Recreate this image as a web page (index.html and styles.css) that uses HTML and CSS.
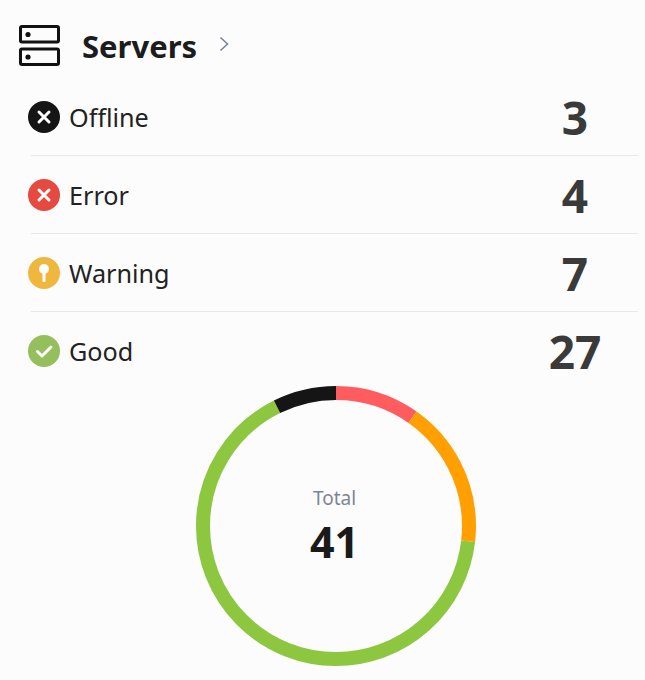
FILE: index.html
```html
<!DOCTYPE html>
<html lang="en">
<head>
<meta charset="utf-8">
<title>Servers</title>
<link rel="stylesheet" href="styles.css">
</head>
<body>
<main class="panel">
  <header class="head">
    <svg class="head-icon" viewBox="0 0 42 42" width="42" height="42" aria-hidden="true">
      <rect x="1.5" y="1.5" width="38" height="15.5" rx="1.5" class="sv"/>
      <rect x="1.5" y="24" width="38" height="15.5" rx="1.5" class="sv"/>
      <circle cx="9" cy="9.5" r="2.6" fill="#111"/>
      <circle cx="9" cy="32" r="2.6" fill="#111"/>
    </svg>
    <h1 class="title">Servers</h1>
    <svg class="chev" viewBox="0 0 10 16" width="10" height="16" aria-hidden="true"><path d="M1.5 1.5 8.5 8 1.5 14.5" fill="none" stroke="#7b8494" stroke-width="1.6"/></svg>
  </header>
  <ul class="rows">
    <li class="row">
      <svg class="st" viewBox="0 0 32 32" width="32" height="32"><circle cx="16" cy="16" r="16" fill="#151515"/><path d="M11 11 21 21M21 11 11 21" stroke="#fff" stroke-width="3" stroke-linecap="round"/></svg>
      <span class="label">Offline</span><span class="num">3</span>
    </li>
    <li class="row">
      <svg class="st" viewBox="0 0 32 32" width="32" height="32"><circle cx="16" cy="16" r="16" fill="#e5493f"/><path d="M11 11 21 21M21 11 11 21" stroke="#fff" stroke-width="3" stroke-linecap="round"/></svg>
      <span class="label">Error</span><span class="num">4</span>
    </li>
    <li class="row">
      <svg class="st" viewBox="0 0 32 32" width="32" height="32"><circle cx="16" cy="16" r="16" fill="#f0b73f"/><circle cx="16" cy="12" r="5" fill="#fff"/><path d="M16 13v10.5" stroke="#fff" stroke-width="3" stroke-linecap="round"/></svg>
      <span class="label">Warning</span><span class="num">7</span>
    </li>
    <li class="row">
      <svg class="st" viewBox="0 0 32 32" width="32" height="32"><circle cx="16" cy="16" r="16" fill="#94bf5c"/><path d="M9.5 16.5 14 21 23 12" fill="none" stroke="#fff" stroke-width="3" stroke-linecap="round" stroke-linejoin="round"/></svg>
      <span class="label">Good</span><span class="num">27</span>
    </li>
  </ul>
  <section class="chart">
    <div class="ring">
      <svg viewBox="0 0 280 280" width="280" height="280" aria-hidden="true">
        <g fill="none" stroke-width="14" transform="rotate(-90 140 140)">
          <circle cx="140" cy="140" r="133" pathLength="41" stroke="#ff5c60" stroke-dasharray="4 37"/>
          <circle cx="140" cy="140" r="133" pathLength="41" stroke="#ffa000" stroke-dasharray="7 34" stroke-dashoffset="-4"/>
          <circle cx="140" cy="140" r="133" pathLength="41" stroke="#8dc63f" stroke-dasharray="27 14" stroke-dashoffset="-11"/>
          <circle cx="140" cy="140" r="133" pathLength="41" stroke="#151515" stroke-dasharray="3 38" stroke-dashoffset="-38"/>
        </g>
      </svg>
      <div class="center">
        <span class="total-label">Total</span>
        <span class="total">41</span>
      </div>
    </div>
  </section>
</main>
</body>
</html>
```

FILE: styles.css
```css
* { box-sizing: border-box; }
html, body { margin: 0; height: 100%; }
body {
  background: #fcfcfc;
  color: #222;
  font-family: "Noto Sans", "Open Sans", "Liberation Sans", sans-serif;
  overflow: hidden;
}
.panel { width: 645px; height: 680px; padding: 24px 7px 0 0; }
.head { display: flex; align-items: center; height: 44px; padding-left: 19px; }
.head-icon { flex: none; }
.sv { fill: none; stroke: #111; stroke-width: 3; }
.title {
  margin: 0 0 0 21px;
  font-size: 31px;
  line-height: 44px;
  font-weight: 700;
  color: #1c1c1c;
}
.chev { margin-left: 22px; margin-top: -4px; }
.rows { list-style: none; margin: 10px 0 0 31px; padding: 0; }
.row {
  display: flex;
  align-items: center;
  height: 78px;
  border-bottom: 1px solid #e4e9ee;
  position: relative;
}
.row:last-child { border-bottom: 0; }
.st { flex: none; margin-left: -3px; }
.label { margin-left: 9px; font-size: 25.2px; color: #222; }
.num {
  margin-left: auto;
  width: 126px;
  text-align: center;
  font-size: 46px;
  font-weight: 700;
  color: #3a3a3a;
}
.chart { display: flex; justify-content: center; margin: -4px -7px 0 0; padding-left: 27px; }
.ring { position: relative; width: 280px; height: 280px; }
.ring svg { display: block; }
.center {
  position: absolute;
  inset: 0;
  padding: 6px 3px 0 0;
  display: flex;
  flex-direction: column;
  align-items: center;
  justify-content: center;
}
.total-label { font-size: 19px; line-height: 24px; color: #7d8794; }
.total { margin-top: 2px; font-size: 43px; line-height: 60px; font-weight: 700; color: #1a1a1a; }
```
